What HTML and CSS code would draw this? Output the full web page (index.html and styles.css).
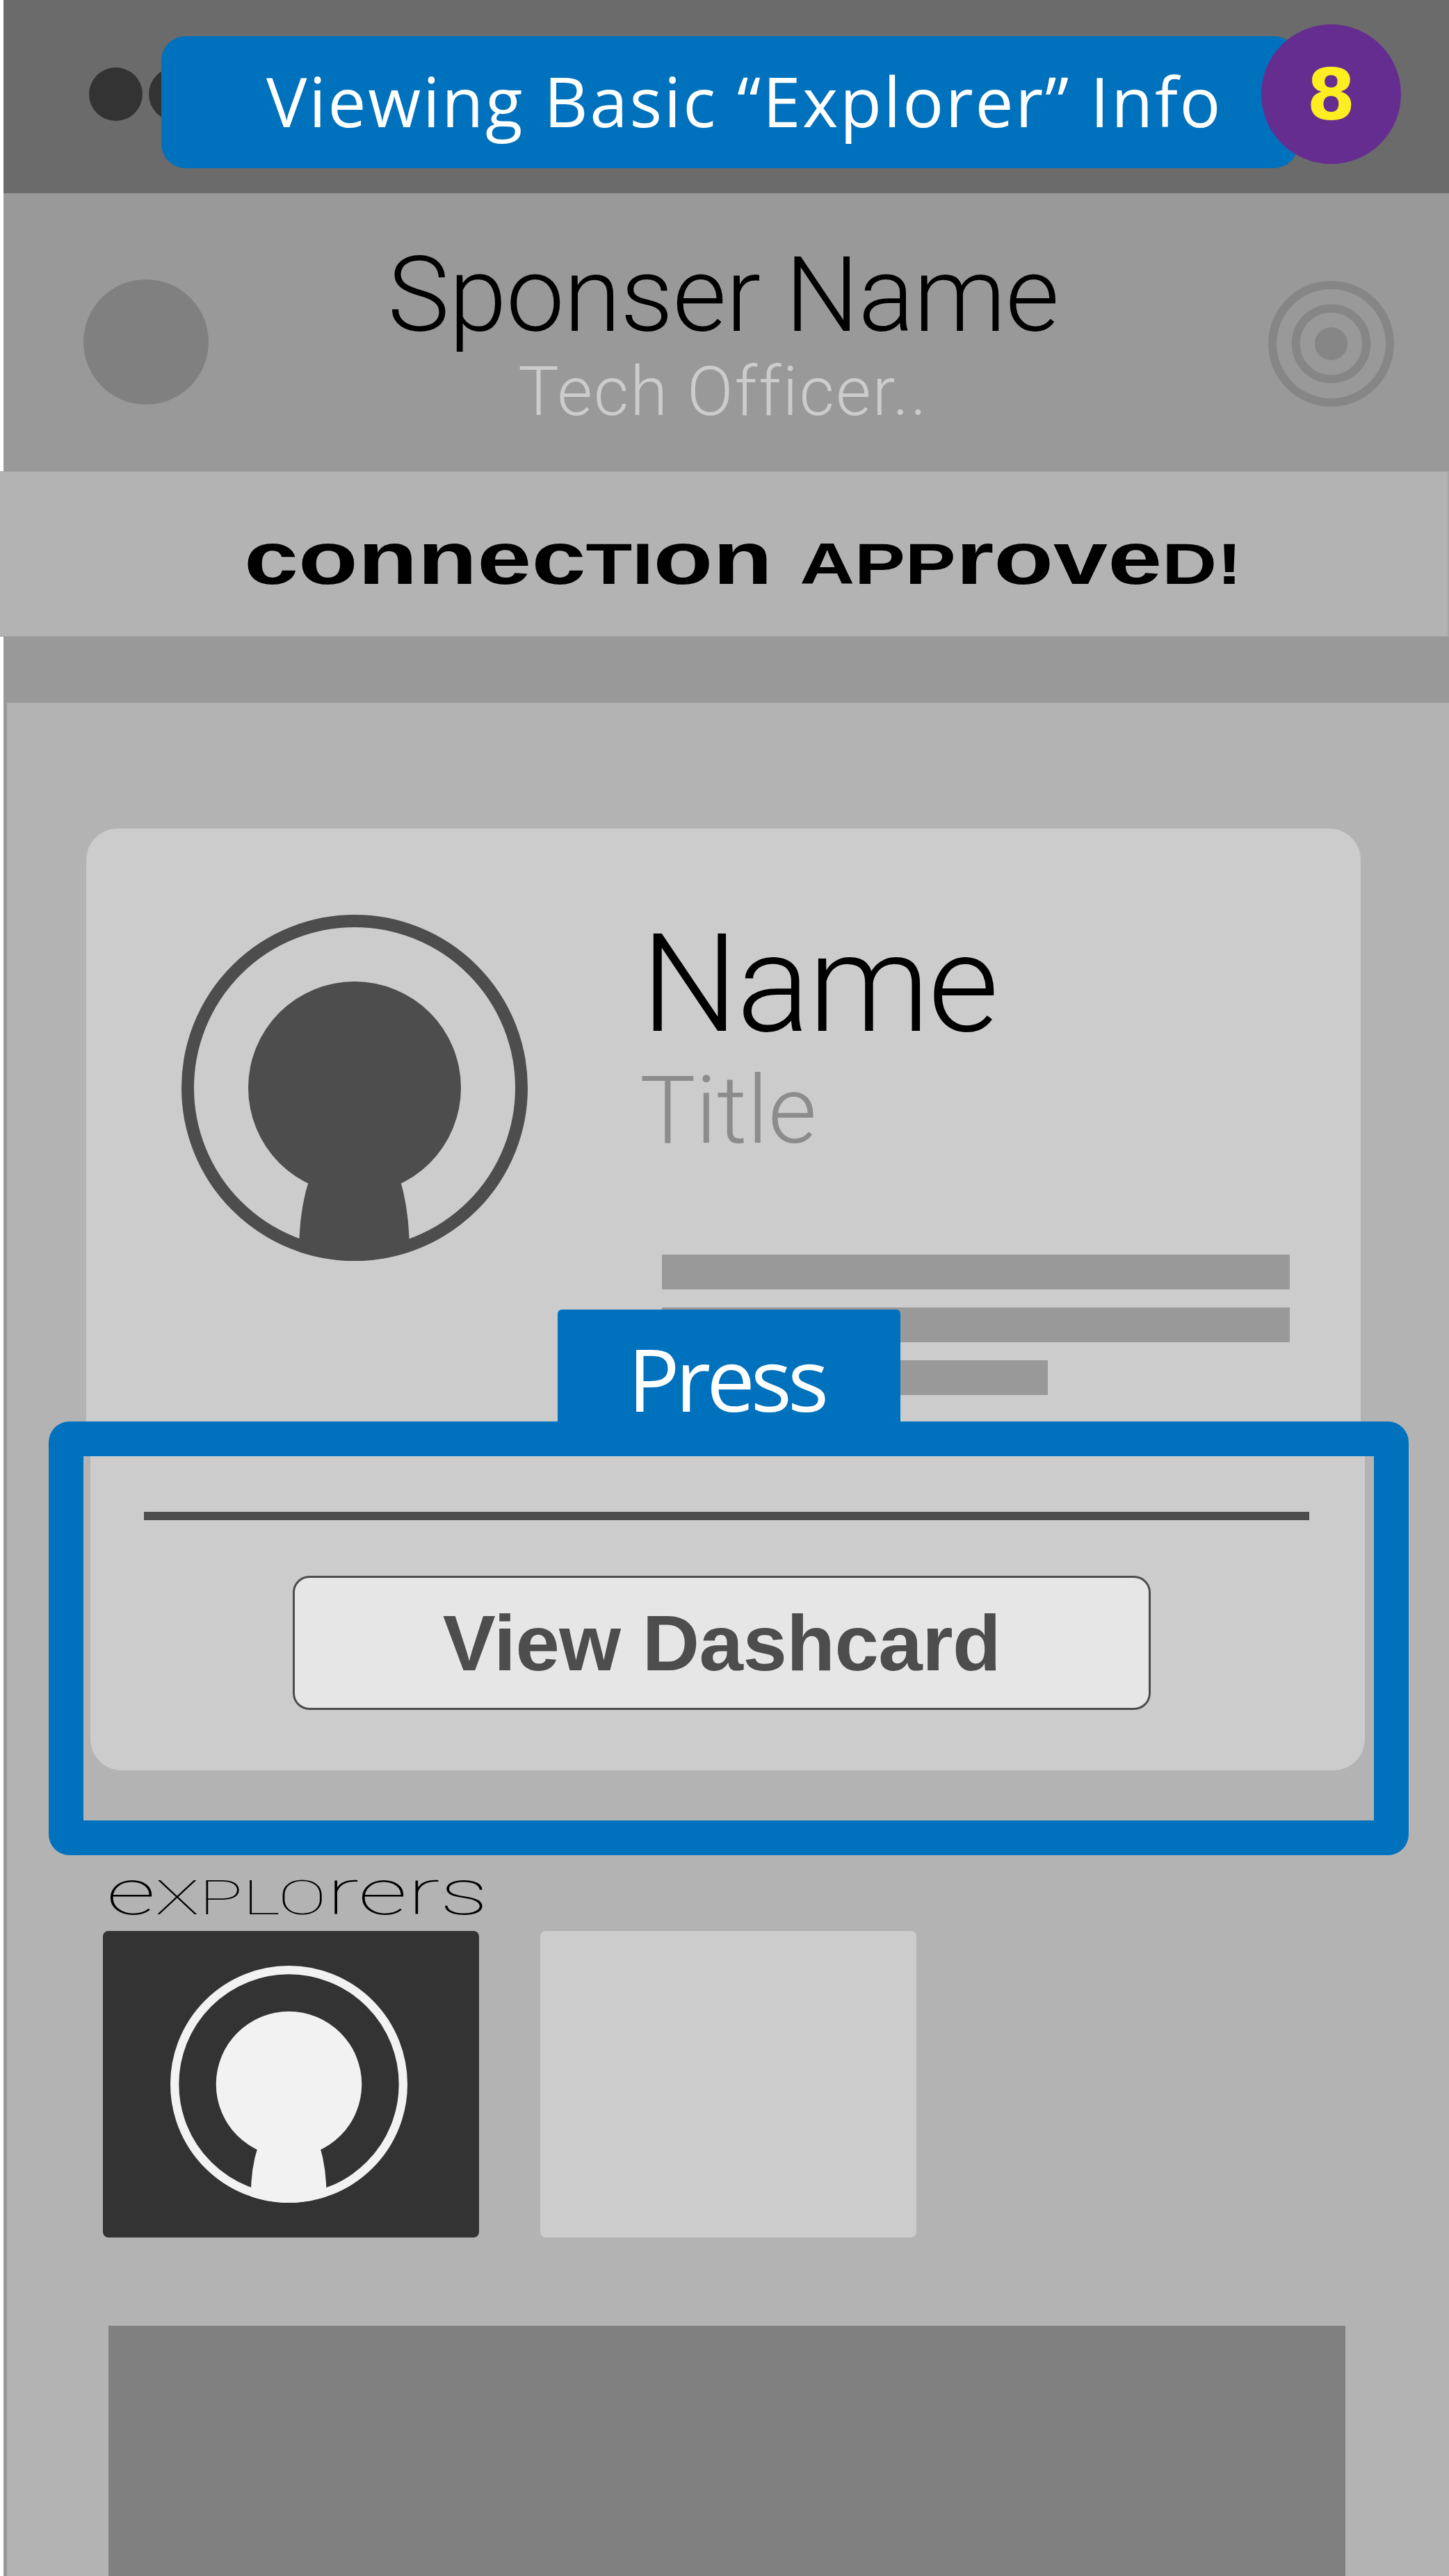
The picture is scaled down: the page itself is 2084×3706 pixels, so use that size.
FILE: index.html
```html
<!DOCTYPE html>
<html>
<head>
<title>Sponsor Connection</title>

<link rel="stylesheet" href="styles.css">
</head>

<body>

<svg class="defs" width="0" height="0">
  <symbol id="person" viewBox="0 0 498 498">
    <circle cx="249" cy="249" r="240" fill="none" stroke="currentColor" stroke-width="18"/>
    <circle cx="249" cy="249" r="153" fill="currentColor"/>
    <path d="M184 380 Q169 425 169 485 A249 249 0 0 0 328 485 Q328 425 314 380Z" fill="currentColor"/>
  </symbol>
</svg>

<!-- TOP BAR -->
<div class="topbar">
  <span class="dot"></span>
  <span class="dot"></span>
  <div class="notice">Viewing Basic “Explorer” Info</div>
  <div class="step">8</div>
</div>

<!-- SPONSOR -->
<div class="sponsor">
  <span class="sponsor-pic"></span>
  <div class="sponsor-text">
    <div class="sponsor-name">Sponser Name</div>
    <div class="sponsor-title">Tech Officer..</div>
  </div>
  <svg class="target" viewBox="0 0 180 180">
    <circle cx="90" cy="90" r="84" fill="none" stroke="#868686" stroke-width="12"/>
    <circle cx="90" cy="90" r="50.5" fill="none" stroke="#868686" stroke-width="12"/>
    <circle cx="90" cy="90" r="23.5" fill="#868686"/>
  </svg>
</div>

<div class="band">
  <div class="band-text">connec<span class="cap">TI</span>on <span class="cap">APP</span>rove<span class="cap">D!</span></div>
</div>
<div class="band-gap"></div>

<!-- MAIN PANEL -->
<div class="panel">

  <div class="card">
    <div class="card-top">
      <svg class="avatar"><use href="#person"/></svg>
      <div class="info">
        <div class="info-name">Name</div>
        <div class="info-title">Title</div>
        <div class="line"></div>
        <div class="line"></div>
        <div class="line short"></div>
      </div>
    </div>
    <div class="card-bottom">
      <div class="rule"></div>
      <button class="dash-btn">View Dashcard</button>
    </div>
  </div>

  <!-- PRESS HIGHLIGHT -->
  <div class="press-frame">
    <div class="press-tab">Press</div>
  </div>

  <div class="explorers">
    <div class="explorers-title">e<span class="cap">XPLO</span>rers</div>
    <div class="thumbs">
      <div class="thumb dark"><svg class="thumb-pic"><use href="#person"/></svg></div>
      <div class="thumb"></div>
    </div>
  </div>

  <div class="footer-block"></div>

</div>

</body>
</html>
```

FILE: styles.css
```css
body {margin:0; background:white; font-family:"Liberation Sans", Arial, sans-serif; overflow-x:hidden;}
.defs {position:absolute;}

/* top bar */
.topbar {
  position:relative; margin-left:5px; height:278px;
  background:#6b6b6b; display:flex; align-items:center; gap:9px;
  padding-left:123px; box-sizing:border-box;
}
.dot {width:77px; height:77px; border-radius:50%; background:#333; margin-top:-8px;}
.notice {
  position:absolute; left:227px; top:52px; width:1635px; height:190px;
  box-sizing:border-box; padding-left:151px; border-radius:35px;
  background:#0071bc; color:white; letter-spacing:2.7px;
  font-family:"Open Sans", sans-serif; font-weight:400; font-size:98px; line-height:186px;
}
.step {
  position:absolute; left:1809px; top:35px; width:201px; height:201px;
  border-radius:50%; background:#662d91; color:#fcee21;
  font:700 101px/204px "DejaVu Sans", sans-serif; text-align:center;
}

/* sponsor row */
.sponsor {
  margin-left:5px; height:400px; background:#999;
  display:flex; align-items:flex-start; justify-content:space-between;
  padding:124px 79px 0 115px; box-sizing:border-box;
}
.sponsor-pic {width:180px; height:180px; border-radius:50%; background:#808080;}
.sponsor-text {margin:-67px 0 0 -44px; text-align:center;}
.sponsor-name {font:300 150px/180px Roboto, sans-serif; color:#000; letter-spacing:-1px;}
.sponsor-title {font:300 98px/98px Roboto, sans-serif; color:#ccc; letter-spacing:2px;}
.target {width:181px; height:181px; margin-top:2px;}

.band {
  height:238px; background:#b3b3b3; box-sizing:border-box;
  border:1px solid #a6a6a6; border-width:1px 2px 1px 0;
  padding:84px 0 0 351px;
}
.band-text {
  width:fit-content;
  font:700 108px/80px "Liberation Sans", sans-serif; color:#000; white-space:nowrap;
  transform:scaleX(1.3); transform-origin:left top;
}
.band-text .cap {font-size:84px;}
.band-gap {margin-left:5px; height:95px; background:#999;}

/* main panel */
.panel {
  position:relative; margin-left:5px; height:2695px; box-sizing:border-box;
  border-left:5px solid #999; background:#b3b3b3;
  padding-top:181px; overflow:hidden;
}

.card {margin-left:114px; width:1833px; height:1355px;}
.card-top {display:flex; height:853px; padding:124px 0 0 137px; box-sizing:border-box; background:#ccc; border-radius:45px 45px 0 0;}
.avatar {width:498px; height:498px; color:#4d4d4d; flex:none;}
.info {margin-left:165px; flex:1;}
.info-name {font:300 197px/190px Roboto, sans-serif; color:#000; margin:5px 0 0 -2px; letter-spacing:-2.5px;}
.info-title {font:300 135px/150px Roboto, sans-serif; color:#8c8c8c; margin:12px 0 0 -4px;}
.line {height:50px; width:903px; background:#999; margin:0 0 26px 28px;}
.line:nth-child(3) {margin-top:132px;}
.line.short {width:555px;}

.card-bottom {
  margin:0 -6px 0 6px; height:502px; background:#ccc;
  border-radius:0 0 45px 45px; padding:130px 0 0 77px; box-sizing:border-box;
}
.rule {width:1676px; height:12px; background:#4d4d4d;}
.dash-btn {
  display:block; margin:80px 0 0 214px; width:1234px; height:193px;
  background:#e6e6e6; border:3px solid #4d4d4d; border-radius:24px;
  color:#4d4d4d; font:700 114px/1 "Liberation Sans", sans-serif; letter-spacing:-0.5px;
}

.press-frame {
  position:absolute; left:60px; top:1034px; width:1956px; height:624px;
  box-sizing:border-box; border:50px solid #0071bc; border-radius:30px;
}
.press-tab {
  position:absolute; left:682px; top:-211px; width:493px; height:162px;
  box-sizing:border-box; padding-right:8px;
  background:#0071bc; border-radius:6px 6px 0 0; color:white; text-align:center;
  font:400 124px/198px "Open Sans", sans-serif; letter-spacing:-6px;
}

.explorers {margin:149px 0 0 138px;}
.explorers-title {
  width:fit-content; height:82px; margin-left:5px; color:#000; white-space:nowrap;
  font:100 91px/54px Roboto, sans-serif;
  transform:scaleX(1.54); transform-origin:left top;
}
.explorers-title .cap {font-size:68px;}
.thumbs {display:flex; gap:88px;}
.thumb {width:541px; height:441px; background:#ccc; border-radius:8px; display:flex; align-items:center; padding-right:7px; box-sizing:border-box; justify-content:center;}
.thumb.dark {background:#333; color:#f2f2f2;}
.thumb-pic {width:341px; height:341px;}

.footer-block {margin:127px 0 0 146px; width:1779px; height:360px; background:#808080;}
```
